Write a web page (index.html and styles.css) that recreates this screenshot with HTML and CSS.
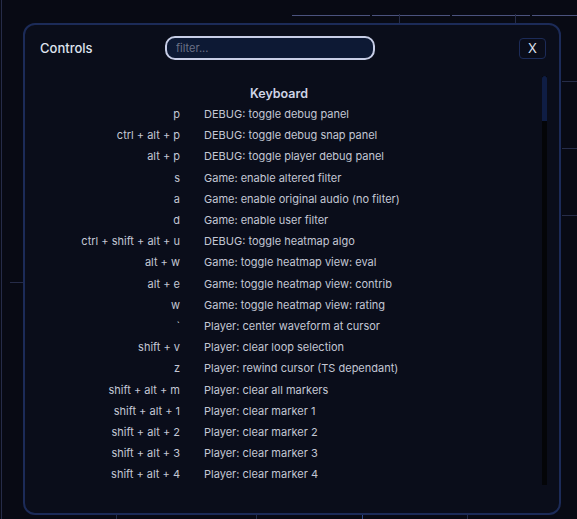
FILE: index.html
```html
<!DOCTYPE html>
<html lang="en">
<head>
    <meta charset="UTF-8">
    <title>Controls</title>
    <link rel="stylesheet" href="styles.css">
</head>
<body>
    <!-- app grid behind the modal -->
    <svg class="backdrop" width="577" height="519" viewBox="0 0 577 519">
        <g stroke="#4b537e" stroke-width="1">
            <line x1="292" y1="15.5" x2="370" y2="15.5"/>
            <line x1="372" y1="15.5" x2="450" y2="15.5"/>
            <line x1="452" y1="15.5" x2="530" y2="15.5"/>
            <line x1="532" y1="15.5" x2="577" y2="15.5"/>
        </g>
        <g stroke="#262c48" stroke-width="1">
            <line x1="399.5" y1="14" x2="399.5" y2="23"/>
            <line x1="515.5" y1="14" x2="515.5" y2="23"/>
            <line x1="1.5" y1="0" x2="1.5" y2="519"/>
            <line x1="10" y1="282.5" x2="23" y2="282.5"/>
            <line x1="562" y1="81.5" x2="577" y2="81.5"/>
            <line x1="562" y1="148.5" x2="577" y2="148.5"/>
            <line x1="562" y1="215.5" x2="577" y2="215.5"/>
            <line x1="116.5" y1="515" x2="116.5" y2="519"/>
            <line x1="256.5" y1="515" x2="256.5" y2="519"/>
            <line x1="467.5" y1="515" x2="467.5" y2="519"/>
        </g>
        <line x1="362.5" y1="515" x2="362.5" y2="519" stroke="#2f4a8a"/>
    </svg>

    <div class="modal">
        <div class="modal-header">
            <div class="modal-title">Controls</div>
            <input type="text" class="filter" placeholder="filter...">
            <button class="close-btn">X</button>
        </div>

        <div class="modal-body">
            <div class="list">
                <h2 class="section-title">Keyboard</h2>
                <div class="bindings">
                    <div class="key">p</div><div class="desc">DEBUG: toggle debug panel</div>
                    <div class="key">ctrl + alt + p</div><div class="desc">DEBUG: toggle debug snap panel</div>
                    <div class="key">alt + p</div><div class="desc">DEBUG: toggle player debug panel</div>
                    <div class="key">s</div><div class="desc">Game: enable altered filter</div>
                    <div class="key">a</div><div class="desc">Game: enable original audio (no filter)</div>
                    <div class="key">d</div><div class="desc">Game: enable user filter</div>
                    <div class="key">ctrl + shift + alt + u</div><div class="desc">DEBUG: toggle heatmap algo</div>
                    <div class="key">alt + w</div><div class="desc">Game: toggle heatmap view: eval</div>
                    <div class="key">alt + e</div><div class="desc">Game: toggle heatmap view: contrib</div>
                    <div class="key">w</div><div class="desc">Game: toggle heatmap view: rating</div>
                    <div class="key">`</div><div class="desc">Player: center waveform at cursor</div>
                    <div class="key">shift + v</div><div class="desc">Player: clear loop selection</div>
                    <div class="key">z</div><div class="desc">Player: rewind cursor (TS dependant)</div>
                    <div class="key">shift + alt + m</div><div class="desc">Player: clear all markers</div>
                    <div class="key">shift + alt + 1</div><div class="desc">Player: clear marker 1</div>
                    <div class="key">shift + alt + 2</div><div class="desc">Player: clear marker 2</div>
                    <div class="key">shift + alt + 3</div><div class="desc">Player: clear marker 3</div>
                    <div class="key">shift + alt + 4</div><div class="desc">Player: clear marker 4</div>
                </div>
            </div>
            <div class="scrollbar">
                <div class="scrollbar-thumb"></div>
            </div>
        </div>
    </div>
</body>
</html>
```

FILE: styles.css
```css
body {
    margin: 0;
    width: 577px;
    height: 519px;
    overflow: hidden;
    background-color: #080a14;
    font-family: Inter, "Noto Sans", sans-serif;
    color: #c3c7d4;
    position: relative;
}

.backdrop {
    position: absolute;
    top: 0;
    left: 0;
}

.modal {
    position: absolute;
    top: 23px;
    left: 23px;
    width: 538px;
    height: 492px;
    box-sizing: border-box;
    border: 2px solid #1c2b58;
    border-radius: 12px;
    background-color: #0a0d1a;
    display: flex;
    flex-direction: column;
}

.modal-header {
    display: flex;
    align-items: center;
    height: 46px;
    padding: 0 13px 0 15px;
    flex-shrink: 0;
}

.modal-title {
    width: 125px;
    font-size: 13px;
    font-weight: 500;
    color: #dfe3ee;
}

.filter {
    width: 210px;
    height: 24px;
    box-sizing: border-box;
    padding: 0 9px;
    border: 2px solid #c7cde6;
    border-radius: 10px;
    background-color: #0d1934;
    color: #dfe3ee;
    font-family: Inter, sans-serif;
    font-size: 11px;
    outline: none;
}

.filter::placeholder {
    color: #6a7086;
}

.close-btn {
    margin-left: auto;
    width: 27px;
    height: 21px;
    padding: 0;
    border: 1px solid #1c2b58;
    border-radius: 4px;
    background: transparent;
    color: #dfe3ee;
    font-family: Inter, sans-serif;
    font-size: 13px;
    cursor: pointer;
}

.modal-body {
    flex: 1;
    display: flex;
    margin: 5px 12px 28px 0;
    min-height: 0;
}

.list {
    flex: 1;
    overflow: hidden;
    padding-top: 8px;
    margin-right: 9px;
}

.scrollbar {
    width: 5px;
    background-color: #040508;
}

.scrollbar-thumb {
    height: 45px;
    background-color: #0f1d44;
    border-radius: 3px 3px 0 0;
}

.section-title {
    margin: 0;
    text-align: center;
    font-size: 12.5px;
    font-weight: 600;
    line-height: 20px;
    color: #cfd4e6;
}

.bindings {
    display: grid;
    grid-template-columns: 155px 1fr;
    column-gap: 24px;
    font-size: 11px;
    line-height: 21.2px;
}

.key {
    text-align: right;
    white-space: nowrap;
}

.desc {
    white-space: nowrap;
}
```
